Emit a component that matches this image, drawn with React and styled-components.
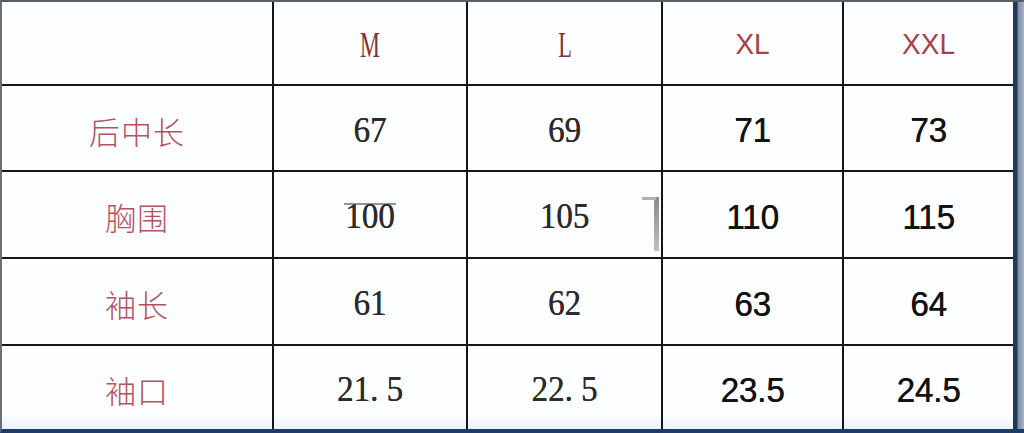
import React from "react";
import styled, { createGlobalStyle } from "styled-components";

const Global = createGlobalStyle`
  html, body { margin: 0; padding: 0; background: #ffffff; }
  #root { width: 1024px; height: 433px; overflow: hidden; }
`;

const Frame = styled.div`
  display: flex;
  width: 1024px;
  height: 433px;
  box-sizing: border-box;
  border-top: 2px solid #5a5f66;
  border-left: 2px solid #6a6f76;
  border-bottom: 4px solid #1f3b69;
  background: #fdfeff;
`;

const Table = styled.div`
  flex: 1;
  display: grid;
  grid-template-columns: 272px 194px 195px 181px 169px;
  grid-template-rows: 84px 86px 87px 87px 83px;
  background: linear-gradient(to bottom, #fdfeff 0, #fdfeff 412px, #e8f3fc 427px);
`;

const RightEdge = styled.div`
  width: 11px;
  background: linear-gradient(to right, #22355b 0, #22355b 4px, #7d8ea8 5px, #a9b4c4 11px);
`;

const Cell = styled.div`
  position: relative;
  display: flex;
  align-items: center;
  justify-content: center;
  box-sizing: border-box;
  border-right: ${(p) => (p.$lastCol ? "none" : "2px solid #161616")};
  border-bottom: ${(p) => (p.$lastRow ? "none" : "2px solid #161616")};
  padding-top: ${(p) => (p.$header ? "4px" : "4px")};
`;

const SerifNum = styled.span`
  display: inline-block;
  font-family: "Liberation Serif", "DejaVu Serif", serif;
  font-size: 33px;
  color: #2b2b2b;
  white-space: pre;
  transform: scaleY(1.1);
  text-shadow: 0.3px 0 #2b2b2b;
`;

const SansNum = styled.span`
  display: inline-block;
  font-family: "Liberation Sans", Arial, sans-serif;
  font-size: 33px;
  color: #121212;
  transform: scaleY(1.06);
  text-shadow: 0.5px 0 #121212;
`;

const HeadSerif = styled.span`
  display: inline-block;
  font-family: "Liberation Serif", "DejaVu Serif", serif;
  font-size: 36px;
  color: #7e3438;
  transform: scaleX(0.62);
`;

const HeadSans = styled.span`
  display: inline-block;
  font-family: "Liberation Sans", Arial, sans-serif;
  font-size: 28px;
  color: #a6414a;
  transform: scaleY(1.04);
`;

const Label = styled.span`
  font-family: "Noto Sans CJK SC", "Noto Sans", sans-serif;
  font-size: 31px;
  font-weight: 300;
  color: #b5525e;
  letter-spacing: 1px;
`;

const Ghost = styled.span`
  position: absolute;
  left: 50%;
  top: 50%;
  width: 52px;
  height: 2px;
  margin-left: -26px;
  margin-top: -12px;
  background: rgba(60, 60, 60, 0.55);
`;

const Artifact = styled.span`
  position: absolute;
  right: 2px;
  top: 25px;
  width: 5px;
  height: 54px;
  background: linear-gradient(to bottom, #8a8a8a, #c0c0c0);
  &::before {
    content: "";
    position: absolute;
    top: 0;
    right: 3px;
    width: 14px;
    height: 3px;
    background: #b0b0b0;
  }
`;

const headers = [
  { text: "", kind: "none" },
  { text: "M", kind: "serif" },
  { text: "L", kind: "serif" },
  { text: "XL", kind: "sans" },
  { text: "XXL", kind: "sans" },
];

const rows = [
  { label: "后中长", values: ["67", "69", "71", "73"] },
  { label: "胸围", values: ["100", "105", "110", "115"] },
  { label: "袖长", values: ["61", "62", "63", "64"] },
  { label: "袖口", values: ["21. 5", "22. 5", "23.5", "24.5"] },
];

export default function App() {
  return (
    <>
      <Global />
      <Frame>
        <Table>
          {headers.map((h, i) => (
            <Cell key={"h" + i} $header $lastCol={i === 4}>
              {h.kind === "serif" && <HeadSerif>{h.text}</HeadSerif>}
              {h.kind === "sans" && <HeadSans>{h.text}</HeadSans>}
            </Cell>
          ))}
          {rows.map((r, ri) => (
            <React.Fragment key={r.label}>
              <Cell $lastRow={ri === rows.length - 1}>
                <Label>{r.label}</Label>
              </Cell>
              {r.values.map((v, vi) => (
                <Cell
                  key={vi}
                  $lastCol={vi === 3}
                  $lastRow={ri === rows.length - 1}
                >
                  {vi < 2 ? <SerifNum>{v}</SerifNum> : <SansNum>{v}</SansNum>}
                  {ri === 1 && vi === 0 && <Ghost />}
                  {ri === 1 && vi === 1 && <Artifact />}
                </Cell>
              ))}
            </React.Fragment>
          ))}
        </Table>
        <RightEdge />
      </Frame>
    </>
  );
}
